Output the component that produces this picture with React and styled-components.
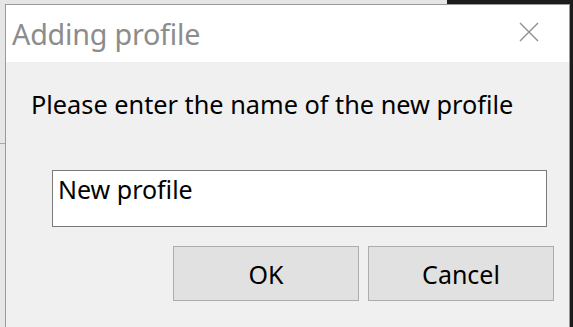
import React from 'react'
import styled, { createGlobalStyle } from 'styled-components'

const GlobalStyle = createGlobalStyle`
  html, body {
    margin: 0;
    padding: 0;
    width: 573px;
    height: 327px;
    overflow: hidden;
    background: #e6e6e6;
  }
  * {
    box-sizing: border-box;
  }
`

const Desktop = styled.div`
  position: relative;
  width: 573px;
  height: 327px;
  padding: 4px 3px 0 5px;
  background: #e6e6e6;
  font-family: "Noto Sans", "Open Sans", sans-serif;
`

// other windows peeking out behind the dialog
const DarkWindow = styled.div`
  position: absolute;
  top: 0;
  right: 0;
  width: ${p => p.w}px;
  height: ${p => p.h}px;
  background: #1c1c1c;
`

const Divider = styled.div`
  position: absolute;
  left: 0;
  top: 143px;
  width: 5px;
  height: 1px;
  background: #a8a8a8;
`

const Dialog = styled.div`
  position: relative;
  display: flex;
  flex-direction: column;
  height: 100%;
  border: 1px solid #9a9a9a;
  border-bottom: none;
  background: #f0f0f0;
`

const TitleBar = styled.div`
  display: flex;
  align-items: center;
  justify-content: space-between;
  height: 57px;
  padding: 0 30px 0 6px;
  background: #fff;
`

const Title = styled.span`
  font-size: 28.7px;
  color: #8c8c8c;
  letter-spacing: -0.2px;
`

const CloseButton = styled.span`
  display: flex;
  width: 20px;
  height: 20px;
  margin-top: -4px;
`

const Body = styled.div`
  display: flex;
  flex-direction: column;
  padding: 25px 15px 0 25px;
`

const Prompt = styled.div`
  font-size: 25.3px;
  color: #000;
  line-height: 35px;
`

const NameInput = styled.div`
  display: flex;
  align-items: flex-start;
  width: 495px;
  height: 57px;
  margin: 48px 0 0 21px;
  padding: 1px 5px;
  background: #fff;
  border: 1px solid #7a7a7a;
  font-size: 25px;
  color: #000;
`

const Buttons = styled.div`
  display: flex;
  justify-content: flex-end;
  gap: 9px;
  margin-top: 19px;
`

const Button = styled.div`
  display: flex;
  align-items: center;
  justify-content: center;
  width: 186px;
  height: 55px;
  background: #e1e1e1;
  border: 1px solid #adadad;
  font-size: 25px;
  color: #000;
`

export default function App() {
  return (
    <>
      <GlobalStyle />
      <Desktop>
        <DarkWindow w={126} h={4} />
        <DarkWindow w={3} h={327} />
        <Divider />
        <Dialog>
          <TitleBar>
            <Title>Adding profile</Title>
            <CloseButton>
              <svg width="20" height="20" viewBox="0 0 20 20">
                <path d="M1 1 L19 19 M19 1 L1 19" stroke="#8f8f8f" strokeWidth="1.4" fill="none" />
              </svg>
            </CloseButton>
          </TitleBar>
          <Body>
            <Prompt>Please enter the name of the new profile</Prompt>
            <NameInput>New profile</NameInput>
            <Buttons>
              <Button>OK</Button>
              <Button>Cancel</Button>
            </Buttons>
          </Body>
        </Dialog>
      </Desktop>
    </>
  )
}
